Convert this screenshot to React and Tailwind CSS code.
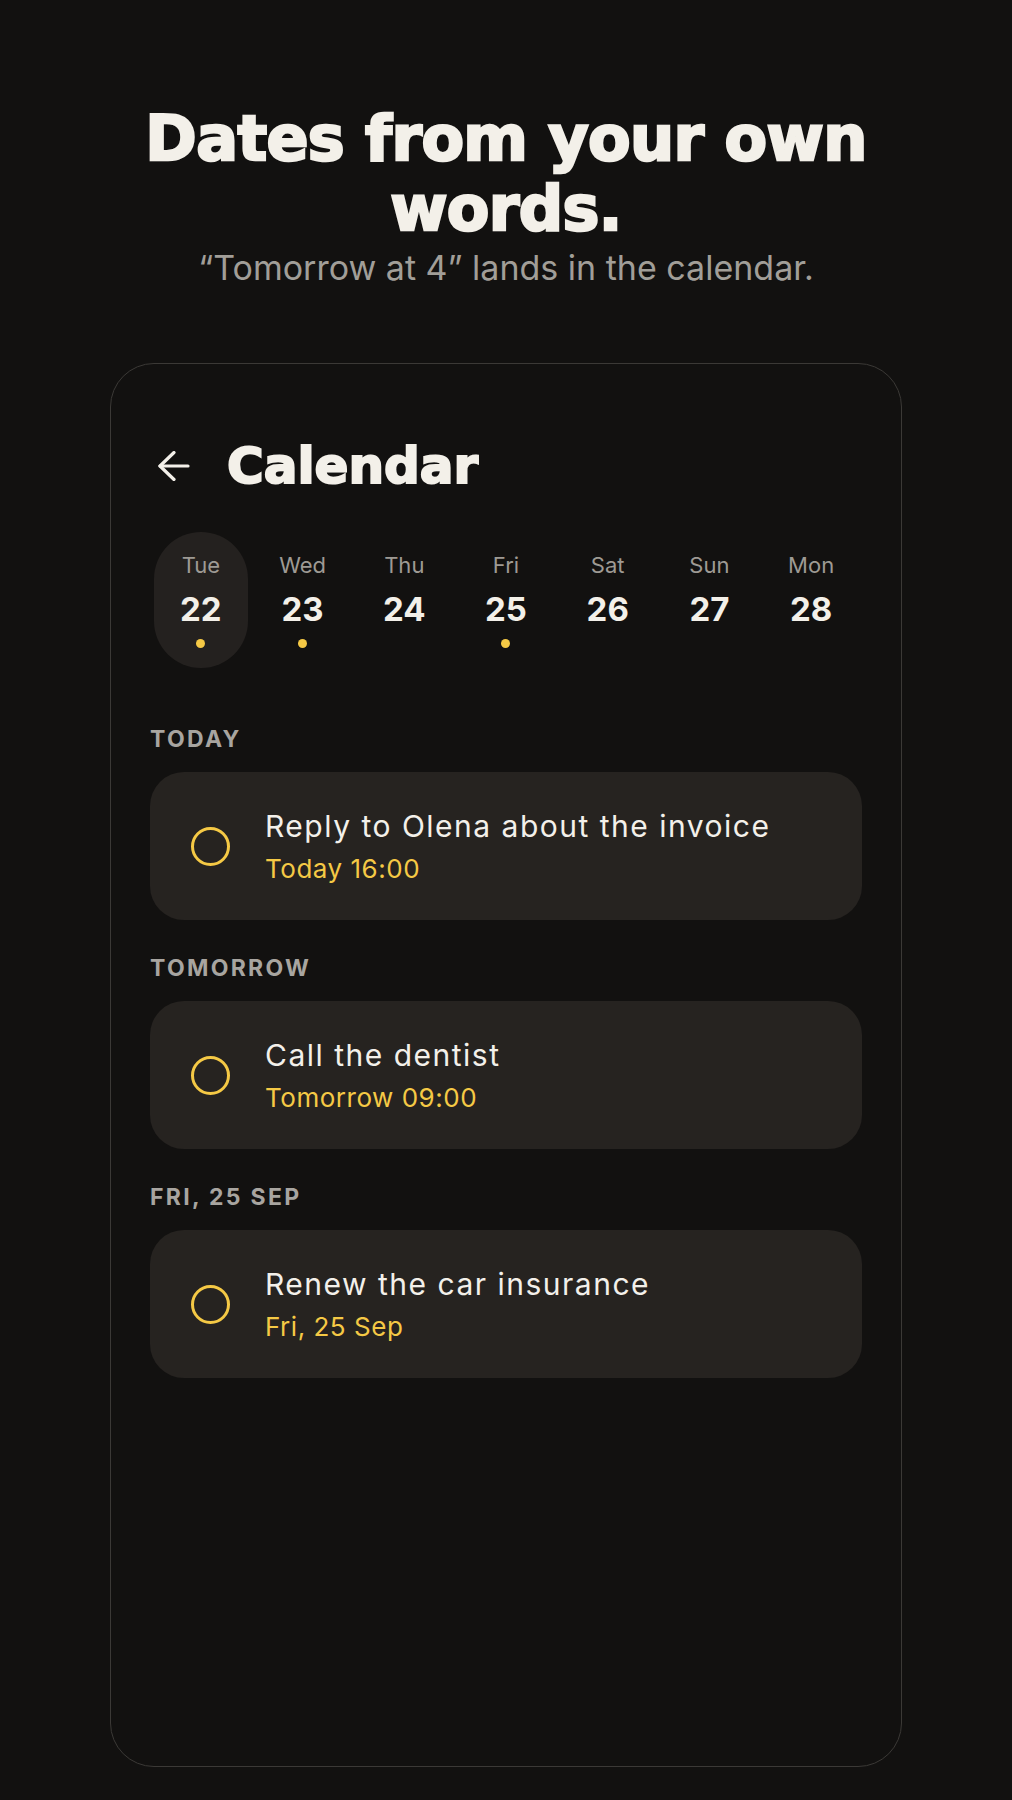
import React from 'react';

const days = [
  { name: 'Tue', num: 22, dot: true, active: true },
  { name: 'Wed', num: 23, dot: true },
  { name: 'Thu', num: 24 },
  { name: 'Fri', num: 25, dot: true },
  { name: 'Sat', num: 26 },
  { name: 'Sun', num: 27 },
  { name: 'Mon', num: 28 },
];

const sections = [
  { label: 'TODAY', title: 'Reply to Olena about the invoice', when: 'Today 16:00' },
  { label: 'TOMORROW', title: 'Call the dentist', when: 'Tomorrow 09:00' },
  { label: 'FRI, 25 SEP', title: 'Renew the car insurance', when: 'Fri, 25 Sep' },
];

const display = { fontFamily: '"DejaVu Sans", "Liberation Sans", sans-serif' };

const App = () => {
  return (
    <div
      className="min-h-[1800px] bg-[#121110] flex flex-col items-center pt-[104px]"
      style={{ fontFamily: 'Inter, "Noto Sans", sans-serif' }}
    >
      <h1
        className="text-[62px] leading-[70px] font-bold text-center text-[#f3f0e9] tracking-[-0.01em] [-webkit-text-stroke:2.5px_#f3f0e9]"
        style={display}
      >
        Dates from your own
        <br />
        words.
      </h1>
      <p className="mt-[4px] text-[34px] leading-[40px] text-[#a19e98]">
        “Tomorrow at 4” lands in the calendar.
      </p>

      {/* phone frame */}
      <div className="mt-[75px] w-[792px] h-[1404px] rounded-[44px] border-[1.5px] border-[#3b3936] px-[39px] pt-[78px]">
        <div className="flex items-center h-[48px]">
          <svg className="ml-[8px]" width="32" height="30" viewBox="0 0 32 30" fill="none" stroke="#f3f0e9" strokeWidth="3.2" strokeLinecap="round" strokeLinejoin="round">
            <path d="M30 15H2" />
            <path d="M16 1.5L2 15l14 13.5" />
          </svg>
          <h2
            className="ml-[37px] text-[50px] leading-[48px] font-bold text-[#f3f0e9] [-webkit-text-stroke:2px_#f3f0e9]"
            style={display}
          >
            Calendar
          </h2>
        </div>

        <div className="mt-[42px] grid grid-cols-7">
          {days.map((d) => (
            <div key={d.num} className="flex justify-center">
              <div
                className={
                  'w-[94px] rounded-full flex flex-col items-center pt-[19px] pb-[20px] ' +
                  (d.active ? 'bg-[#24211f]' : '')
                }
              >
                <span className="text-[22px] leading-[28px] text-[#9e9a94]">{d.name}</span>
                <span className="mt-[10px] text-[33px] leading-[40px] font-bold text-[#f3f0e9]">{d.num}</span>
                <span className={'mt-[10px] w-[9px] h-[9px] rounded-full ' + (d.dot ? 'bg-[#f5c945]' : 'bg-transparent')} />
              </div>
            </div>
          ))}
        </div>

        <div className="mt-[57px]">
          {sections.map((s, i) => (
            <div key={s.label} className={i > 0 ? 'mt-[34px]' : ''}>
              <div className="text-[23px] leading-[28px] font-bold tracking-[0.1em] text-[#a8a5a0]">{s.label}</div>
              <div className="mt-[19px] h-[148px] rounded-[34px] bg-[#262320] flex items-center pl-[41px]">
                <div className="w-[39px] h-[39px] rounded-full border-[3.5px] border-[#f5c945] shrink-0" />
                <div className="ml-[35px] flex flex-col">
                  <span className="text-[30px] leading-[36px] tracking-[0.05em] text-[#f3f0ea]">{s.title}</span>
                  <span className="mt-[10px] text-[26px] leading-[30px] tracking-[0.02em] text-[#f5c945]">{s.when}</span>
                </div>
              </div>
            </div>
          ))}
        </div>
      </div>
    </div>
  );
};

export default App;
